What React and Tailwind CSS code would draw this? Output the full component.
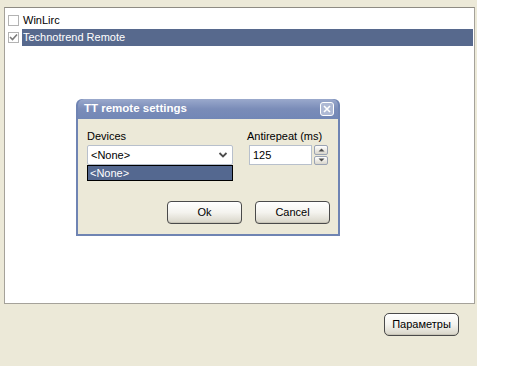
import React from "react";

const font = { fontFamily: '"Liberation Sans", Arial, sans-serif' };

function Check({ checked }) {
  return (
    <div className="w-[11px] h-[11px] border border-[#b3b3b3] bg-white flex items-center justify-center shrink-0">
      {checked && (
        <svg width="9" height="9" viewBox="0 0 9 9">
          <path d="M1 4 L3.5 6.5 L8 1.5" stroke="#7b7b7b" strokeWidth="1.6" fill="none" />
        </svg>
      )}
    </div>
  );
}

function XpButton({ children, className = "" }) {
  return (
    <div
      className={`h-[23px] flex items-center justify-center rounded-[4px] border border-[#4a4a4a] bg-gradient-to-b from-[#ffffff] via-[#f4f3ee] to-[#d8d5c8] text-[11px] text-black shadow-[inset_0_-1px_0_#c8c5b8] ${className}`}
    >
      {children}
    </div>
  );
}

export default function App() {
  return (
    <div className="w-[512px] h-[384px] bg-white relative overflow-hidden" style={font}>
      <div className="w-[477px] h-[366px] bg-[#ece9d8] pt-[7px] pl-[4px] flex flex-col">
        <div className="w-[471px] h-[297px] bg-white border border-[#a5a29a] border-t-[#8e8b83] pt-[4px] pl-[3px] pr-[1px] flex flex-col">
          <div className="h-[17px] flex items-center gap-[3px]">
            <Check />
            <span className="text-[11px] text-black px-[1px]">WinLirc</span>
          </div>
          <div className="h-[17px] flex items-center gap-[3px]">
            <Check checked />
            <span className="flex-1 h-[17px] bg-[#57698d] text-white text-[11px] leading-[17px] px-[1px]">
              Technotrend Remote
            </span>
          </div>
        </div>
        <div className="flex justify-end pr-[18px] pt-[9px]">
          <XpButton className="w-[75px] rounded-[5px]">Параметры</XpButton>
        </div>
      </div>

      <div className="absolute left-[76px] top-[99px] w-[264px] h-[137px] rounded-t-[6px] bg-[#6f84b3] p-[2px] pt-0 flex flex-col">
        <div className="h-[20px] flex items-center justify-between pl-[6px] pr-[4px] rounded-t-[6px] bg-gradient-to-b from-[#9aa9cc] via-[#7a8cb8] to-[#7287b6]">
          <span className="text-white font-bold text-[11.5px]">TT remote settings</span>
          <div className="w-[14px] h-[14px] rounded-[3px] border border-white bg-[#aeb9d4] flex items-center justify-center">
            <svg width="8" height="8" viewBox="0 0 8 8">
              <path d="M1 1 L7 7 M7 1 L1 7" stroke="#ffffff" strokeWidth="1.6" />
            </svg>
          </div>
        </div>
        <div className="flex-1 bg-[#ece9d8] relative">
          <div className="absolute left-[9px] top-[9px] text-[11px] text-black">Devices</div>
          <div className="absolute left-[9px] top-[26px] w-[146px] h-[20px] bg-white border border-[#b8c0cc] rounded-[2px] flex items-center justify-between pl-[3px] pr-[4px]">
            <span className="text-[11px] text-black">&lt;None&gt;</span>
            <svg width="10" height="8" viewBox="0 0 10 8">
              <path d="M1.5 2 L5 5.5 L8.5 2" stroke="#4d4d4d" strokeWidth="1.8" fill="none" />
            </svg>
          </div>
          <div className="absolute left-[9px] top-[46px] w-[146px] h-[16px] bg-[#546890] border border-black flex items-center pl-[2px]">
            <span className="text-[11px] text-white">&lt;None&gt;</span>
          </div>

          <div className="absolute left-[169px] top-[9px] text-[11px] text-black">Antirepeat (ms)</div>
          <div className="absolute left-[171px] top-[26px] w-[63px] h-[20px] bg-white border border-[#b8c0cc] flex items-center pl-[3px]">
            <span className="text-[11px] text-black">125</span>
          </div>
          <div className="absolute left-[236px] top-[26px] w-[14px] h-[20px] flex flex-col gap-[1px]">
            <div className="flex-1 rounded-[2px] border border-[#9aa3b3] bg-gradient-to-b from-white to-[#d9d6cc] flex items-center justify-center">
              <svg width="7" height="4" viewBox="0 0 7 4"><path d="M0.5 3.5 L3.5 0.5 L6.5 3.5 Z" fill="#4d4d4d" /></svg>
            </div>
            <div className="flex-1 rounded-[2px] border border-[#9aa3b3] bg-gradient-to-b from-white to-[#d9d6cc] flex items-center justify-center">
              <svg width="7" height="4" viewBox="0 0 7 4"><path d="M0.5 0.5 L3.5 3.5 L6.5 0.5 Z" fill="#4d4d4d" /></svg>
            </div>
          </div>

          <div className="absolute left-[89px] top-[82px]">
            <XpButton className="w-[75px]">Ok</XpButton>
          </div>
          <div className="absolute left-[177px] top-[82px]">
            <XpButton className="w-[75px]">Cancel</XpButton>
          </div>
        </div>
      </div>
    </div>
  );
}
